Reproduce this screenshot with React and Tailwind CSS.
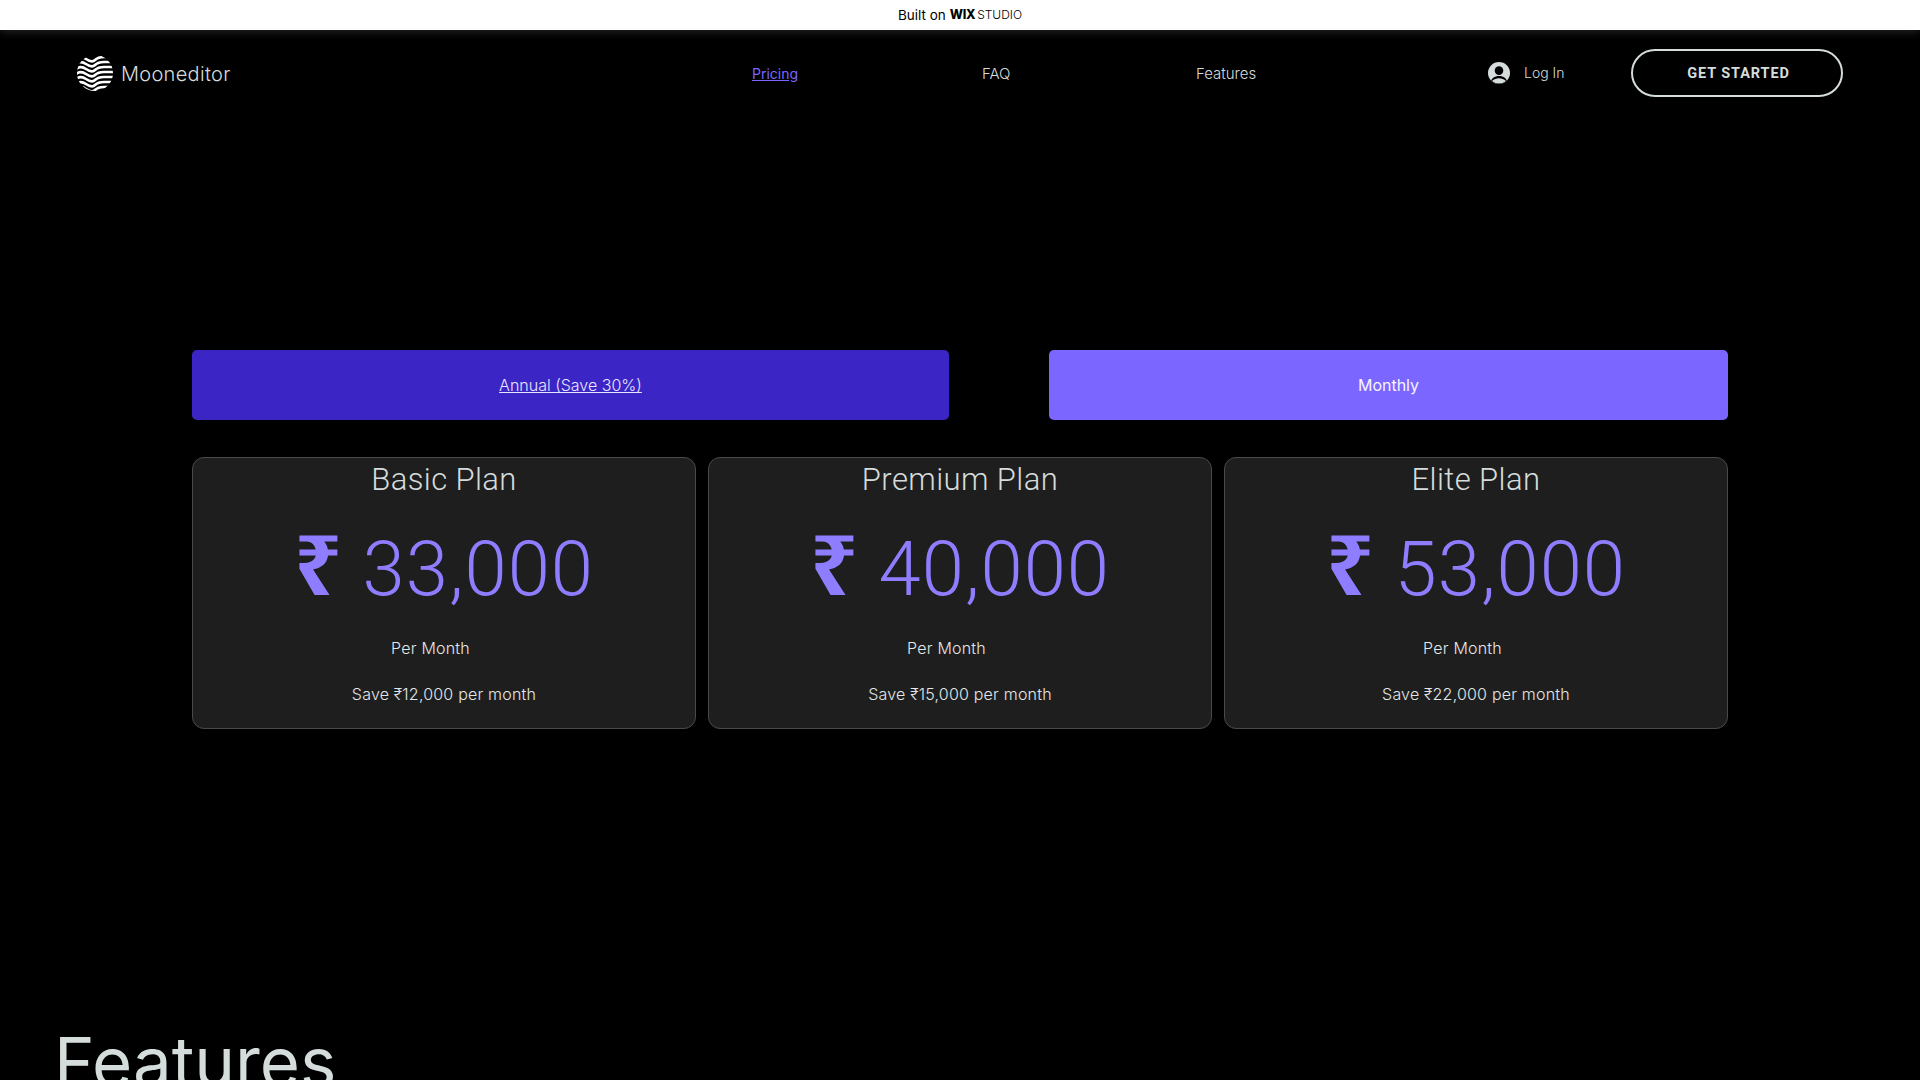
const plans = [
  { name: "Basic Plan", price: "33,000", save: "12,000" },
  { name: "Premium Plan", price: "40,000", save: "15,000" },
  { name: "Elite Plan", price: "53,000", save: "22,000" },
];

function Logo() {
  const waves = [2, 7, 12, 17, 22, 27, 32];
  return (
    <svg width="36" height="36" viewBox="0 0 36 36" fill="none">
      <clipPath id="moon">
        <circle cx="18" cy="18" r="18" />
      </clipPath>
      <g clipPath="url(#moon)" stroke="#fff" strokeWidth="2.700">
        {waves.map((y) => (
          <path key={y} d={`M-2 ${y + 3} q5 -5 11 -1 t9 1 t9 -3 t11 0`} />
        ))}
      </g>
    </svg>
  );
}

function UserIcon() {
  return (
    <svg width="22" height="22" viewBox="0 0 22 22">
      <clipPath id="avatar">
        <circle cx="11" cy="11" r="11" />
      </clipPath>
      <circle cx="11" cy="11" r="11" fill="#d5dcdc" />
      <g clipPath="url(#avatar)" fill="#000">
        <circle cx="11" cy="8.600" r="4.300" />
        <path d="M2.500 21c0.500 -4.500 4 -7 8.500 -7s8 2.500 8.500 7c-2 1.500 -5 1.800 -8.500 1.800s-6.500 -0.300 -8.500 -1.800z" />
      </g>
      <path d="M4 19c2 -1.900 4.500 -2.700 7 -2.700s5 0.800 7 2.700c-2 1.700 -4.300 2.500 -7 2.500s-5 -0.800 -7 -2.500z" fill="#d5dcdc" />
    </svg>
  );
}

function PlanCard({ plan }) {
  return (
    <div className="flex-1 h-[272px] bg-[#1e1e1e] border border-[#4a4a4a] rounded-[12px] flex flex-col items-center text-[#d5dcdc]">
      <h2 className="mt-[2px] h-[40px] leading-[40px] text-[31px] font-light font-['Roboto',sans-serif] tracking-[0.4px]">{plan.name}</h2>
      <div className="mt-[23px] h-[80px] leading-[80px] text-[76px] font-light font-['Roboto',sans-serif] text-[#8f7dff] tracking-[1px] whitespace-pre">
        <span className="text-[84px] font-bold font-['Noto_Sans',sans-serif]">₹</span> {plan.price}
      </div>
      <p className="mt-[33px] h-[24px] leading-[24px] text-[16px] font-light text-[#e2e7e7] tracking-[0.2px] pr-[27px]">Per Month</p>
      <p className="mt-[22px] h-[24px] leading-[24px] text-[16px] font-light text-[#e2e7e7] tracking-[0.2px]">Save ₹{plan.save} per month</p>
    </div>
  );
}

export default function App() {
  return (
    <div className="h-screen overflow-hidden bg-black font-['Inter',sans-serif] text-[#d5dcdc]">
      <div className="relative h-[30px] bg-white flex items-center justify-center text-[13.5px] text-black shadow-[0_2px_8px_rgba(255,255,255,0.14)]">
        Built on <span className="ml-1 text-[12.5px] font-extrabold tracking-tight">WIX</span>
        <span className="ml-[2px] font-light text-[12px]">STUDIO</span>
      </div>

      <header className="h-[86px] flex items-center pl-[77px]">
        <div className="w-[675px] flex items-center gap-2">
          <Logo />
          <span className="pt-[2px] text-[20px] font-light tracking-[0.3px]">Mooneditor</span>
        </div>
        <nav className="flex pt-[2px] text-[15px] font-light">
          <a className="w-[230px] text-[14px] font-normal text-[#7b66ff] underline">Pricing</a>
          <a className="w-[214px]">FAQ</a>
          <a className="w-[292px]">Features</a>
        </nav>
        <div className="w-[143px] flex items-center gap-[14px] text-[14px] font-light">
          <UserIcon />
          <span className="pb-[2px]">Log In</span>
        </div>
        <button className="w-[212px] h-[48px] pl-[3px] pt-[2px] rounded-full border-2 border-[#d5dcdc] text-[14.5px] font-bold font-['Roboto',sans-serif] tracking-[0.9px]">
          GET STARTED
        </button>
      </header>

      <main className="px-[192px] pt-[234px]">
        <div className="flex justify-between text-[16px]">
          <button className="w-[757px] h-[70px] rounded-[5px] bg-[#3b25c4] text-[#e8e6ff] font-light underline">Annual (Save 30%)</button>
          <button className="w-[679px] h-[70px] rounded-[5px] bg-[#7b66ff] text-[#f6f5ff]">Monthly</button>
        </div>
        <div className="mt-[37px] flex gap-3">
          {plans.map((plan) => (
            <PlanCard key={plan.name} plan={plan} />
          ))}
        </div>
      </main>

      <h1 className="mt-[288px] pl-[54px] text-[69px] leading-[90px] font-normal">Features</h1>
    </div>
  );
}
